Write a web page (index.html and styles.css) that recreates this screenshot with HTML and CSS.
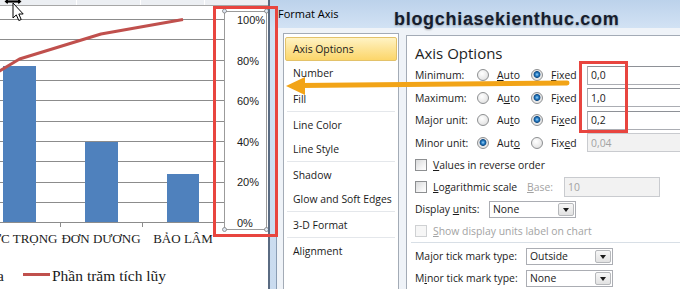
FILE: index.html
```html
<!DOCTYPE html>
<html>
<head>
<meta charset="utf-8">
<link rel="stylesheet" href="styles.css">
</head>
<body>
<div class="screen">
  <div class="chart">
    <svg width="268" height="289" viewBox="0 0 268 289" xmlns="http://www.w3.org/2000/svg">
      <rect x="0" y="0" width="268" height="289" fill="#ffffff"/>
      <rect x="0" y="0" width="268" height="5" fill="#eceff3"/>
      <line x1="76.5" y1="0" x2="76.5" y2="5" stroke="#ffffff"/>
      <line x1="140.5" y1="0" x2="140.5" y2="5" stroke="#ffffff"/>
      <line x1="204.5" y1="0" x2="204.5" y2="5" stroke="#ffffff"/>
      <line x1="0" y1="5.5" x2="268" y2="5.5" stroke="#a7a7a7"/>
      <g stroke="#8c8c8c" stroke-width="1">
        <line x1="0" y1="19.5" x2="224" y2="19.5"/>
        <line x1="0" y1="39.5" x2="224" y2="39.5"/>
        <line x1="0" y1="60.5" x2="224" y2="60.5"/>
        <line x1="0" y1="80.5" x2="224" y2="80.5"/>
        <line x1="0" y1="100.5" x2="224" y2="100.5"/>
        <line x1="0" y1="121.5" x2="224" y2="121.5"/>
        <line x1="0" y1="141.5" x2="224" y2="141.5"/>
        <line x1="0" y1="161.5" x2="224" y2="161.5"/>
        <line x1="0" y1="182.5" x2="224" y2="182.5"/>
        <line x1="0" y1="202.5" x2="224" y2="202.5"/>
      </g>
      <g fill="#4f81bd">
        <rect x="3" y="66" width="33" height="156"/>
        <rect x="85" y="142" width="33" height="80"/>
        <rect x="167" y="174" width="32" height="48"/>
      </g>
      <g stroke="#8c8c8c">
        <line x1="0" y1="222.5" x2="224" y2="222.5"/>
        <line x1="60.5" y1="222" x2="60.5" y2="227"/>
        <line x1="142.5" y1="222" x2="142.5" y2="227"/>
      </g>
      <polyline points="-12,78 19.5,59 101,34 183,19.5" fill="none" stroke="#c0504d" stroke-width="3" stroke-linejoin="round"/>
      <rect x="224.5" y="11.5" width="42" height="218" fill="none" stroke="#9b9b9b"/>
      <g fill="#dfe8f3" stroke="#7d7d7d" stroke-width="0.8">
        <circle cx="224.5" cy="11" r="2"/>
        <circle cx="266.5" cy="11" r="2"/>
        <circle cx="224.5" cy="229.5" r="2"/>
        <circle cx="266.5" cy="229.5" r="2"/>
      </g>
      <g class="axis-label">
        <text x="237" y="23.5">100%</text>
        <text x="237" y="64.5">80%</text>
        <text x="237" y="104.5">60%</text>
        <text x="237" y="145.5">40%</text>
        <text x="237" y="186">20%</text>
        <text x="237" y="226.5">0%</text>
      </g>
      <g class="cat-label" text-anchor="middle">
        <text x="19.5" y="243">ĐỨC TRỌNG</text>
        <text x="101" y="243">ĐƠN DƯƠNG</text>
        <text x="183" y="243">BẢO LÂM</text>
      </g>
      <text class="legend" x="4" y="281" text-anchor="end">a</text>
      <line x1="23" y1="274.5" x2="50" y2="274.5" stroke="#c0504d" stroke-width="3"/>
      <text class="legend" x="52" y="281">Phần trăm tích lũy</text>
    </svg>
  </div>

  <div class="dialog">
    <div class="titlebar">Format Axis</div>
    <div class="dialog-body">
      <ul class="nav">
        <li class="nav-item active">Axis Options</li>
        <li class="nav-item">Number</li>
        <li class="nav-gap"></li>
        <li class="nav-item">Fill</li>
        <li class="nav-sep"></li>
        <li class="nav-item">Line Color</li>
        <li class="nav-item">Line Style</li>
        <li class="nav-sep"></li>
        <li class="nav-item">Shadow</li>
        <li class="nav-item">Glow and Soft Edges</li>
        <li class="nav-sep"></li>
        <li class="nav-item">3-D Format</li>
        <li class="nav-sep"></li>
        <li class="nav-item">Alignment</li>
      </ul>
      <div class="panel">
        <div class="panel-title">Axis Options</div>
        <div class="opt-row">
          <span>Minimum:</span>
          <span class="choice"><i class="radio"></i><span><u>A</u>uto</span></span>
          <span class="choice"><i class="radio on"></i><span><u>F</u>ixed</span></span>
          <span class="field">0,0</span>
        </div>
        <div class="opt-row">
          <span>Maximum:</span>
          <span class="choice"><i class="radio"></i><span>A<u>u</u>to</span></span>
          <span class="choice"><i class="radio on"></i><span>F<u>i</u>xed</span></span>
          <span class="field">1,0</span>
        </div>
        <div class="opt-row">
          <span>Major unit:</span>
          <span class="choice"><i class="radio"></i><span>Au<u>t</u>o</span></span>
          <span class="choice"><i class="radio on"></i><span>Fi<u>x</u>ed</span></span>
          <span class="field">0,2</span>
        </div>
        <div class="opt-row">
          <span>Minor unit:</span>
          <span class="choice"><i class="radio on"></i><span>Aut<u>o</u></span></span>
          <span class="choice"><i class="radio"></i><span>Fix<u>e</u>d</span></span>
          <span class="field disabled">0,04</span>
        </div>
        <div class="check-row">
          <i class="check"></i><span><u>V</u>alues in reverse order</span>
        </div>
        <div class="check-row">
          <i class="check"></i><span class="log-label"><u>L</u>ogarithmic scale</span>
          <span class="base-label"><u>B</u>ase:</span>
          <span class="field disabled base-field">10</span>
        </div>
        <div class="check-row">
          <span class="units-label">Display <u>u</u>nits:</span>
          <span class="combo units-combo"><span>None</span><i class="combo-btn"></i></span>
        </div>
        <div class="check-row muted">
          <i class="check disabled"></i><span><u>S</u>how display units label on chart</span>
        </div>
        <div class="panel-sep"></div>
        <div class="check-row">
          <span class="tick-label">Ma<u>j</u>or tick mark type:</span>
          <span class="combo tick-combo"><span>Outside</span><i class="combo-btn"></i></span>
        </div>
        <div class="check-row">
          <span class="tick-label">M<u>i</u>nor tick mark type:</span>
          <span class="combo tick-combo"><span>None</span><i class="combo-btn"></i></span>
        </div>
      </div>
    </div>
  </div>

  <div class="redbox redbox-axis"></div>
  <div class="redbox redbox-fields"></div>

  <svg class="arrow" width="300" height="30" viewBox="0 0 300 30" xmlns="http://www.w3.org/2000/svg">
    <line x1="14" y1="15.5" x2="281" y2="13" stroke="#f2a417" stroke-width="5" stroke-linecap="round"/>
    <polygon points="0,16 19,7 19,25" fill="#f2a417"/>
  </svg>

  <div class="watermark">blogchiasekienthuc.com</div>

  <svg class="cursor" width="30" height="24" viewBox="0 0 30 24" xmlns="http://www.w3.org/2000/svg">
    <path d="M4 1.5 L8 -2 L8 0 L18 0 L18 -2 L22 1.5 L18 5 L18 3 L8 3 L8 5 Z" fill="#000" stroke="#fff" stroke-width="0.8"/>
    <path d="M13 3 L13 18 L16.3 14.9 L18.8 20.5 L21.2 19.5 L18.8 14 L23.2 14 Z" fill="#fff" stroke="#000" stroke-width="1" stroke-linejoin="round"/>
  </svg>
</div>
</body>
</html>
```

FILE: styles.css
```css
* {
  box-sizing: border-box;
  margin: 0;
  padding: 0;
}

body {
  margin: 0;
  width: 680px;
  height: 289px;
  overflow: hidden;
  background: #ffffff;
  font-family: "Open Sans", "Liberation Sans", sans-serif;
}

.screen {
  position: relative;
  display: flex;
  width: 680px;
  height: 289px;
  overflow: hidden;
}

.chart {
  flex: none;
  width: 268px;
  height: 289px;
}

.chart svg {
  display: block;
}

.axis-label {
  font-family: "Liberation Sans", Arial, sans-serif;
  font-size: 11px;
  fill: #1a1a1a;
}

.cat-label {
  font-family: "Liberation Serif", "Times New Roman", serif;
  font-size: 13px;
  fill: #1a1a1a;
}

.legend {
  font-family: "Liberation Serif", "Times New Roman", serif;
  font-size: 15.5px;
  fill: #1a1a1a;
}

/* dialog */
.dialog {
  flex: none;
  width: 440px;
  height: 289px;
  display: flex;
  flex-direction: column;
  border-left: 2px solid #5a6b82;
  background: linear-gradient(180deg, #bcd2eb 0, #d2e2f4 28px, #c9dbef 100%);
}

.titlebar {
  flex: none;
  height: 28px;
  padding: 0 0 2px 8px;
  display: flex;
  align-items: center;
  font-size: 11px;
  color: #000;
}

.dialog-body {
  flex: 1;
  margin-left: 6px;
  border-left: 1px solid #8a9db4;
  background: #eff3f8;
  display: flex;
  align-items: flex-start;
  gap: 7px;
  padding: 5px 0 0 6px;
}

.nav {
  flex: none;
  width: 116px;
  height: 270px;
  list-style: none;
  background: #ffffff;
  border: 1px solid #a3abb6;
  padding: 3px 1px 0;
}

.nav-item {
  height: 24px;
  display: flex;
  align-items: center;
  padding-left: 8px;
  font-size: 10.4px;
  color: #1b1b1b;
  white-space: nowrap;
}

.nav-item.active {
  border: 1px solid #e3c26a;
  border-radius: 2px;
  padding-left: 7px;
  background: linear-gradient(180deg, #fff3c4 0, #fde59a 45%, #fcd66a 100%);
}

.nav-gap {
  height: 2px;
}

.nav-sep {
  height: 2px;
  margin: 0 2px;
  border-top: 1px solid #e4e7eb;
}

.panel {
  flex: none;
  width: 300px;
  height: 260px;
  margin-top: 2px;
  background: #ffffff;
  border: 1px solid #a3abb6;
  padding: 8px 0 0 8px;
  font-size: 10.4px;
  color: #1b1b1b;
}

.panel-title {
  height: 18px;
  line-height: 18px;
  font-size: 15px;
  color: #1e1e1e;
  margin-bottom: 2px;
}

.opt-row {
  display: grid;
  grid-template-columns: 62px 54px 56px 1fr;
  align-items: center;
  height: 22.5px;
  white-space: nowrap;
}

.choice {
  display: flex;
  align-items: center;
  gap: 8px;
}

.radio {
  flex: none;
  display: block;
  width: 12px;
  height: 12px;
  border-radius: 50%;
  border: 1px solid #8d8f91;
  background: radial-gradient(circle at 40% 35%, #ffffff 0, #e9e9e9 60%, #d2d2d2 100%);
}

.radio.on {
  background: radial-gradient(circle at 50% 45%, #9fd4f7 0, #2b82c9 1.6px, #0f4c87 3px, #e4e4e4 3.8px, #f7f7f7 100%);
}

.field {
  display: flex;
  align-items: center;
  height: 19px;
  width: 120px;
  padding-left: 3px;
  border: 1px solid #abadb3;
  border-top-color: #8e9197;
  background: #ffffff;
  color: #1b1b1b;
}

.field.disabled {
  background: #f2f2f2;
  border-color: #c9cbcf;
  color: #a2a2a2;
}

.check-row {
  display: flex;
  align-items: center;
  height: 22px;
  white-space: nowrap;
}

.check {
  flex: none;
  display: block;
  width: 12px;
  height: 12px;
  margin-right: 6px;
  border: 1px solid #8d8f91;
  background: linear-gradient(135deg, #d9dadb 0, #f6f6f6 70%, #ffffff 100%);
}

.check.disabled {
  border-color: #cfd1d3;
  background: #f6f6f6;
}

.muted {
  color: #a3a3a3;
}

.log-label {
  width: 94px;
}

.base-label {
  width: 37px;
  color: #a3a3a3;
}

.base-field {
  width: 96px;
  height: 20px;
}

.units-label {
  width: 74px;
}

.tick-label {
  width: 111px;
}

.combo {
  display: flex;
  align-items: center;
  height: 17px;
  padding-left: 3px;
  border: 1px solid #abadb3;
  background: #ffffff;
  width: 87px;
}

.combo-btn {
  display: block;
  position: relative;
  margin-left: auto;
  margin-right: 1px;
  width: 16px;
  height: 13px;
  border: 1px solid #b6b8bb;
  border-radius: 2px;
  background: linear-gradient(180deg, #f7f7f7 0, #e2e2e2 100%);
}

.combo-btn::after {
  content: "";
  position: absolute;
  left: 4px;
  top: 4px;
  border-left: 3.5px solid transparent;
  border-right: 3.5px solid transparent;
  border-top: 4px solid #1a1a1a;
}

.panel-sep {
  height: 1px;
  margin: 0 0 2px -4px;
  background: #d8dfe6;
}

/* overlays */
.redbox {
  position: absolute;
  border: 3px solid #e8453f;
}

.redbox-axis {
  left: 213px;
  top: 6px;
  width: 65px;
  height: 231px;
}

.redbox-fields {
  left: 579px;
  top: 61px;
  width: 49px;
  height: 72px;
}

.arrow {
  position: absolute;
  left: 286px;
  top: 70px;
}

.watermark {
  position: absolute;
  left: 394px;
  top: 8px;
  font-family: "Liberation Sans", Arial, sans-serif;
  font-weight: bold;
  font-size: 18px;
  line-height: 22px;
  letter-spacing: 0.7px;
  color: #161d2e;
  text-shadow: 0 1px 2px rgba(0, 0, 0, 0.3);
}

.cursor {
  position: absolute;
  left: 0;
  top: 0;
}
```
